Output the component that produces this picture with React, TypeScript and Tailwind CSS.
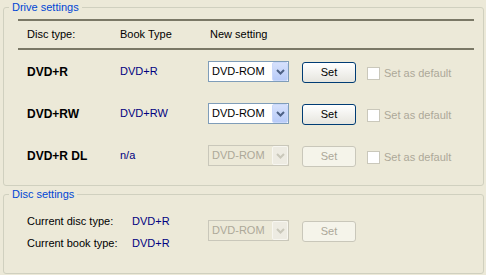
import React from "react";

const rows = [
  { disc: "DVD+R", book: "DVD+R", enabled: true },
  { disc: "DVD+RW", book: "DVD+RW", enabled: true },
  { disc: "DVD+R DL", book: "n/a", enabled: false },
];

const Chevron = ({ color }: { color: string }) => (
  <svg width="9" height="6" viewBox="0 0 9 6">
    <path d="M1 1 L4.5 4.5 L8 1" fill="none" stroke={color} strokeWidth="2" />
  </svg>
);

const Combo = ({ enabled }: { enabled: boolean }) => (
  <div
    className={`flex w-[81px] h-[21px] border ${
      enabled ? "border-[#7F9DB9] bg-white text-black" : "border-[#C9C7BA] bg-[#ECE9D8] text-[#ACA899]"
    }`}
  >
    <span className="flex-1 pl-[3px] leading-[19px]">DVD-ROM</span>
    <div
      className={`w-[16px] h-[19px] flex items-center justify-center rounded-[2px] border ${
        enabled
          ? "border-[#CAD8FB] bg-gradient-to-b from-[#D6E1FC] to-[#B8CBF8]"
          : "border-[#F7F6F0] bg-[#EDEBE2]"
      }`}
    >
      <Chevron color={enabled ? "#4D6185" : "#C9C7BA"} />
    </div>
  </div>
);

const SetButton = ({ enabled }: { enabled: boolean }) => (
  <button
    className={`w-[54px] h-[21px] rounded-[3px] border text-[11px] leading-[19px] ${
      enabled
        ? "border-[#003C74] bg-gradient-to-b from-white to-[#E6E5DE] text-black"
        : "border-[#C9C7BA] bg-[#F5F4EA] text-[#ACA899]"
    }`}
  >
    Set
  </button>
);

export default function App() {
  return (
    <div className="w-[486px] h-[275px] bg-[#ECE9D8] pt-px pl-[3px] text-[11px] text-black font-['Liberation_Sans',Arial,sans-serif]">
      <fieldset className="w-[481px] border border-[#D0D0BF] rounded-[3px] pb-[19px]">
        <legend className="ml-[5px] px-[3px] leading-[13px] text-[#0046D5]">Drive settings</legend>
        <div className="mt-[5px] ml-[14px] w-[456px] h-[31px] border-y-2 border-[#7A7866] flex items-center pl-[9px]">
          <span className="w-[93px]">Disc type:</span>
          <span className="w-[90px]">Book Type</span>
          <span>New setting</span>
        </div>
        <div className="mt-[11px] flex flex-col gap-[21px]">
          {rows.map((r) => (
            <div key={r.disc} className="flex items-center h-[21px] pl-[23px]">
              <span className="w-[93px] font-bold text-[12px]">{r.disc}</span>
              <span className="w-[88px] text-[#000080]">{r.book}</span>
              <Combo enabled={r.enabled} />
              <div className="ml-[13px] mt-[2px]">
                <SetButton enabled={r.enabled} />
              </div>
              <div className="ml-[11px] mt-[3px] w-[13px] h-[13px] border border-[#CAC8BB] bg-white" />
              <span className="ml-[4px] mt-[3px] text-[#ACA899]">Set as default</span>
            </div>
          ))}
        </div>
      </fieldset>
      <fieldset className="mt-[2px] w-[481px] border border-[#D0D0BF] rounded-[3px] pb-[19px]">
        <legend className="ml-[5px] px-[3px] leading-[13px] text-[#0046D5]">Disc settings</legend>
        <div className="pt-[9px] pl-[23px] flex">
          <div className="w-[181px] leading-[22px]">
            <div className="flex">
              <span className="w-[105px]">Current disc type:</span>
              <span className="text-[#000080]">DVD+R</span>
            </div>
            <div className="flex">
              <span className="w-[105px]">Current book type:</span>
              <span className="text-[#000080]">DVD+R</span>
            </div>
          </div>
          <div className="mt-[10px] flex items-start">
            <Combo enabled={false} />
            <div className="ml-[13px] mt-[1px]">
              <SetButton enabled={false} />
            </div>
          </div>
        </div>
      </fieldset>
    </div>
  );
}
